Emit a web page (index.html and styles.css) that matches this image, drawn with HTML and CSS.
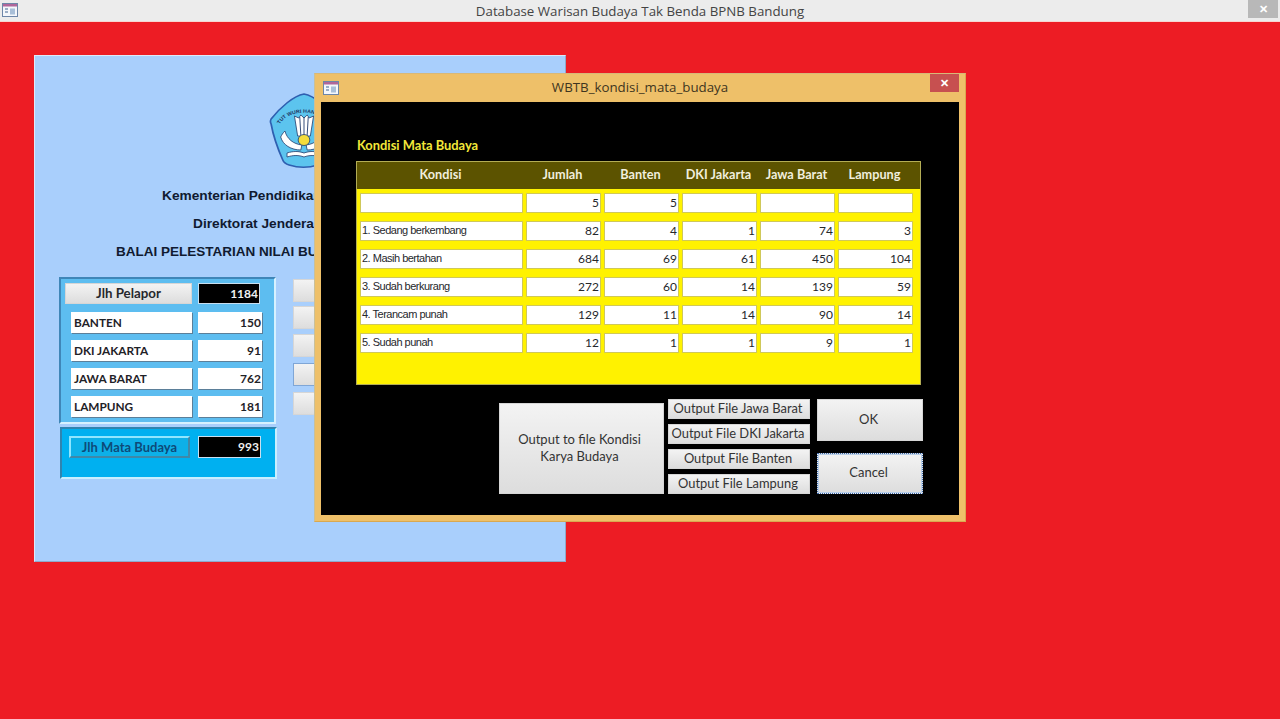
FILE: index.html
```html
<!DOCTYPE html>
<html lang="en">

<head>
    <title>Database Warisan Budaya Tak Benda BPNB Bandung</title>
    <link rel="stylesheet" href="styles.css">
</head>

<body>
    <header class="app-bar">
        <svg class="form-icon" viewBox="0 0 16 14">
            <rect x="0.5" y="0.5" width="15" height="13" fill="#f4f7fb" stroke="#6d86a8" />
            <rect x="1" y="1" width="14" height="2.5" fill="#b0669a" />
            <path d="M3 6h3M3 9h3" stroke="#7d96b5" stroke-width="1.4" />
            <path d="M8 5.5h5v6H8z" fill="#a9bfd8" />
        </svg>
        <span class="app-title">Database Warisan Budaya Tak Benda BPNB Bandung</span>
        <span class="app-close">&#10005;</span>
    </header>

    <!-- main form, partly behind the dialog -->
    <section class="main-form">
        <svg class="logo" viewBox="0 0 66 76" preserveAspectRatio="none">
            <path d="M33 1C43 3 55 14 64 26c1 2 1 3 0 5-3 12-7 24-12 36-1 3-3 4-6 5-9 3-18 3-27 0-3-1-5-2-6-5C8 55 4 43 2 31c-1-2-1-3 0-5C11 14 23 3 33 1z" fill="#5cc4ee" stroke="#2f5fb0" stroke-width="1.6" />
            <path id="logoArc" d="M9 34C15 15 51 15 57 34" fill="none" />
            <text class="logo-text"><textPath href="#logoArc" startOffset="3">TUT WURI HANDAYANI</textPath></text>
            <path d="M24 23l3 20h12l3-20-4 2-2-3-3 3-3-3-2 3z" fill="#fff" stroke="#26406f" stroke-width="0.8" />
            <path d="M29 24l1 18M33 24v18M37 24l-1 18" stroke="#26406f" stroke-width="0.9" />
            <path d="M15 38c2 8 8 13 16 14l-1 5c-9 0-17-5-19-13 1-2 2-4 4-6z" fill="#fff" stroke="#26406f" stroke-width="0.8" />
            <path d="M51 38c-2 8-8 13-16 14l1 5c9 0 17-5 19-13-1-2-2-4-4-6z" fill="#fff" stroke="#26406f" stroke-width="0.8" />
            <circle cx="33" cy="47" r="5.5" fill="#f4dc3c" stroke="#26406f" stroke-width="0.8" />
            <path d="M17 60c6-2 11-2 16 0 5-2 10-2 16 0v4c-6-2-11-2-16 0-5-2-10-2-16 0z" fill="#fff" stroke="#26406f" stroke-width="0.8" />
        </svg>

        <h1 class="org-line org-ministry">Kementerian Pendidikan</h1>
        <h1 class="org-line org-directorate">Direktorat Jenderal</h1>
        <h1 class="org-line org-office">BALAI PELESTARIAN NILAI BUDAYA</h1>

        <div class="main-lower">
            <div class="panels">
                <div class="panel panel-reports">
                    <div class="report-row report-head">
                        <button class="grey-btn report-btn">Jlh Pelapor</button>
                        <span class="black-value report-total">1184</span>
                    </div>
                    <div class="report-row"><span class="region-name">BANTEN</span><span class="region-value">150</span></div>
                    <div class="report-row"><span class="region-name">DKI JAKARTA</span><span class="region-value">91</span></div>
                    <div class="report-row"><span class="region-name">JAWA BARAT</span><span class="region-value">762</span></div>
                    <div class="report-row"><span class="region-name">LAMPUNG</span><span class="region-value">181</span></div>
                </div>
                <div class="panel panel-items">
                    <div class="report-row items-row">
                        <button class="items-btn">Jlh Mata Budaya</button>
                        <span class="black-value items-total">993</span>
                    </div>
                </div>
            </div>
            <div class="side-buttons">
                <button class="grey-btn side-btn side-a"></button>
                <button class="grey-btn side-btn side-b"></button>
                <button class="grey-btn side-btn side-c"></button>
                <button class="grey-btn side-btn side-d"></button>
                <button class="grey-btn side-btn side-e"></button>
            </div>
        </div>
    </section>

    <!-- dialog -->
    <section class="dialog">
        <div class="dialog-bar">
            <svg class="form-icon" viewBox="0 0 16 14">
                <rect x="0.5" y="0.5" width="15" height="13" fill="#f4f7fb" stroke="#6d86a8" />
                <rect x="1" y="1" width="14" height="2.5" fill="#b0669a" />
                <path d="M3 6h3M3 9h3" stroke="#7d96b5" stroke-width="1.4" />
                <path d="M8 5.5h5v6H8z" fill="#a9bfd8" />
            </svg>
            <span class="dialog-title">WBTB_kondisi_mata_budaya</span>
            <span class="dialog-close">&#10005;</span>
        </div>

        <div class="dialog-body">
            <h2 class="dialog-heading">Kondisi Mata Budaya</h2>

            <div class="cond-table">
                <div class="cond-head">
                    <span>Kondisi</span>
                    <span>Jumlah</span>
                    <span>Banten</span>
                    <span>DKI Jakarta</span>
                    <span>Jawa Barat</span>
                    <span>Lampung</span>
                </div>
                <div class="cond-rows">
                    <span class="cell cell-name"></span>
                    <span class="cell">5</span>
                    <span class="cell">5</span>
                    <span class="cell"></span>
                    <span class="cell"></span>
                    <span class="cell"></span>

                    <span class="cell cell-name">1. Sedang berkembang</span>
                    <span class="cell">82</span>
                    <span class="cell">4</span>
                    <span class="cell">1</span>
                    <span class="cell">74</span>
                    <span class="cell">3</span>

                    <span class="cell cell-name">2. Masih bertahan</span>
                    <span class="cell">684</span>
                    <span class="cell">69</span>
                    <span class="cell">61</span>
                    <span class="cell">450</span>
                    <span class="cell">104</span>

                    <span class="cell cell-name">3. Sudah berkurang</span>
                    <span class="cell">272</span>
                    <span class="cell">60</span>
                    <span class="cell">14</span>
                    <span class="cell">139</span>
                    <span class="cell">59</span>

                    <span class="cell cell-name">4. Terancam punah</span>
                    <span class="cell">129</span>
                    <span class="cell">11</span>
                    <span class="cell">14</span>
                    <span class="cell">90</span>
                    <span class="cell">14</span>

                    <span class="cell cell-name">5. Sudah punah</span>
                    <span class="cell">12</span>
                    <span class="cell">1</span>
                    <span class="cell">1</span>
                    <span class="cell">9</span>
                    <span class="cell">1</span>
                </div>
            </div>

            <div class="dialog-actions">
                <button class="grey-btn output-all">Output to file Kondisi Karya Budaya</button>
                <div class="output-list">
                    <button class="grey-btn output-btn">Output File Jawa Barat</button>
                    <button class="grey-btn output-btn">Output File DKI Jakarta</button>
                    <button class="grey-btn output-btn">Output File Banten</button>
                    <button class="grey-btn output-btn">Output File Lampung</button>
                </div>
                <div class="confirm-list">
                    <button class="grey-btn ok-btn">OK</button>
                    <button class="grey-btn cancel-btn">Cancel</button>
                </div>
            </div>
        </div>
    </section>
</body>

</html>
```

FILE: styles.css
```css
* {
    box-sizing: border-box;
}

body {
    margin: 0;
    height: 719px;
    overflow: hidden;
    background-color: #ed1c24;
    font-family: "Lato", "Liberation Sans", sans-serif;
    color: #222222;
}

button {
    font-family: "Lato", "Liberation Sans", sans-serif;
    padding: 0;
    color: #333333;
}

.form-icon {
    width: 16px;
    height: 14px;
    flex: none;
}

/* top bar */
.app-bar {
    position: relative;
    height: 22px;
    display: flex;
    align-items: center;
    padding: 0 0 1px 2px;
    background-color: #ececec;
    border-bottom: 1px solid #f7d5d0;
}

.app-title,
.dialog-title {
    position: absolute;
    left: 0;
    right: 0;
    text-align: center;
    font-family: "Open Sans", sans-serif;
    font-size: 13.3px;
    color: #444444;
}

.app-title {
    top: 2px;
}

.app-close {
    position: absolute;
    right: 2px;
    top: 0;
    width: 30px;
    height: 18px;
    background-color: #b8b8b8;
    color: #ffffff;
    font-size: 11px;
    font-weight: bold;
    line-height: 18px;
    text-align: center;
}

/* main form */
.main-form {
    position: absolute;
    left: 34px;
    top: 55px;
    width: 532px;
    height: 507px;
    padding: 37px 0 0 24px;
    background-color: #a9cffc;
    border-top: 1px solid #dfeaf8;
    border-left: 1px solid #dfeaf8;
    border-right: 1px solid #8fa9c9;
    border-bottom: 1px solid #8fa9c9;
}

.logo {
    display: block;
    width: 70px;
    height: 76px;
    margin: 0 0 13px 210px;
}

.logo-text {
    font-family: "Liberation Sans", sans-serif;
    font-size: 5px;
    font-weight: bold;
    fill: #1d3463;
}

.org-line {
    margin: 0;
    height: 28px;
    line-height: 28px;
    font-family: "Liberation Sans", sans-serif;
    font-size: 13.7px;
    font-weight: bold;
    white-space: nowrap;
    color: #101a30;
}

.org-ministry {
    margin-left: 103px;
}

.org-directorate {
    margin-left: 134px;
}

.org-office {
    margin-left: 57px;
    font-size: 13.5px;
}

.main-lower {
    display: flex;
    gap: 16px;
    margin-top: 11px;
}

.panels {
    width: 218px;
}

.panel {
    border: 2px solid;
}

.panel-reports {
    width: 217px;
    height: 147px;
    padding-top: 4px;
    background-color: #5dbdf0;
    border-color: #3f86b8 #d6f1ff #d6f1ff #3f86b8;
}

.panel-items {
    height: 52px;
    margin: 3px 0 0 1px;
    padding-top: 7px;
    background-color: #00b0f0;
    border-color: #2f84b0 #c8efff #c8efff #2f84b0;
}

.report-row {
    display: flex;
    gap: 6px;
    height: 21px;
    margin: 0 0 7px 10px;
    font-size: 11.8px;
    font-weight: bold;
    line-height: 22px;
}

.report-head {
    margin: 0 0 8px 4px;
}

.items-row {
    height: 22px;
    margin: 0 0 0 7px;
    gap: 8px;
}

.grey-btn {
    background: linear-gradient(#f3f3f3, #dddddd);
    border: 1px solid #d6d6d6;
}

.report-btn {
    width: 127px;
    padding-bottom: 2px;
    font-size: 13.3px;
    font-weight: bold;
    color: #26282c;
}

.black-value {
    background-color: #000000;
    color: #f0f0f0;
    text-align: right;
    padding-right: 1px;
    border: 1px solid #c8dff0;
    font-size: 12px;
    line-height: 19px;
}

.report-total {
    width: 62px;
}

.region-name {
    width: 121px;
    padding-left: 3px;
    background-color: #ffffff;
    box-shadow: 1px 1px 0 #5b7f99;
    color: #1f2227;
}

.region-value {
    width: 64px;
    padding-right: 1px;
    text-align: right;
    background-color: #ffffff;
    box-shadow: 1px 1px 0 #5b7f99;
    color: #1f2227;
    font-size: 12px;
}

.items-btn {
    width: 121px;
    padding-bottom: 1px;
    background-color: #0db0e8;
    border: 2px solid;
    border-color: #8fe6ff #3f88a8 #3f88a8 #8fe6ff;
    font-size: 13px;
    font-weight: bold;
    color: #0d4a78;
}

.items-total {
    width: 63px;
}

.side-buttons {
    display: flex;
    flex-direction: column;
    padding-top: 2px;
}

.side-btn {
    width: 60px;
    height: 23px;
}

.side-b {
    margin-top: 4px;
}

.side-c {
    margin-top: 5px;
}

.side-d {
    margin-top: 6px;
    border-color: #7fa6d6;
}

.side-e {
    margin-top: 6px;
}

/* dialog */
.dialog {
    position: absolute;
    left: 314px;
    top: 73px;
    width: 652px;
    height: 449px;
    display: flex;
    flex-direction: column;
    padding: 0 6px 6px 6px;
    background-color: #eec069;
    border-left: 1px solid #c9c09a;
    border-top: 1px solid #d8b878;
    border-right: 1px solid #d9a850;
    border-bottom: 1px solid #d9a850;
}

.dialog-bar {
    position: relative;
    height: 28px;
    display: flex;
    align-items: center;
    flex: none;
    padding-left: 2px;
}

.dialog-title {
    top: 4px;
    color: #3e3520;
}

.dialog-close {
    position: absolute;
    right: 0;
    top: 0;
    width: 29px;
    height: 18px;
    background-color: #c75050;
    color: #ffffff;
    font-size: 11px;
    font-weight: bold;
    line-height: 18px;
    text-align: center;
}

.dialog-body {
    flex: 1;
    padding: 35px 0 0 35px;
    background-color: #000000;
}

.dialog-heading {
    margin: 0 0 8px 1px;
    height: 16px;
    font-size: 12.9px;
    font-weight: bold;
    line-height: 17px;
    color: #f2e83a;
}

.cond-table {
    width: 565px;
    height: 224px;
    background-color: #fff200;
    border: 1px solid #b3ad55;
}

.cond-head,
.cond-rows {
    display: grid;
    grid-template-columns: 163px repeat(5, 75px);
    column-gap: 3px;
    padding-left: 3px;
}

.cond-head {
    height: 27px;
    margin-bottom: 4px;
    padding-left: 2px;
    background-color: #5c5300;
    font-size: 12.7px;
    font-weight: bold;
    line-height: 24px;
    text-align: center;
    color: #f1eedd;
}

.cond-rows {
    grid-auto-rows: 20px;
    row-gap: 8px;
}

.cell {
    padding-right: 1px;
    background-color: #ffffff;
    border: 1px solid #cfc85a;
    font-size: 12px;
    line-height: 18px;
    text-align: right;
    color: #26282c;
}

.cell-name {
    padding: 0 0 0 1px;
    font-family: "Liberation Sans", sans-serif;
    font-size: 11px;
    letter-spacing: -0.5px;
    line-height: 17px;
    text-align: left;
}

.dialog-actions {
    display: flex;
    margin: 14px 0 0 143px;
}

.output-all {
    width: 165px;
    height: 91px;
    margin: 4px 4px 0 0;
    padding: 0 18px 2px 14px;
    font-size: 13px;
    line-height: 17px;
}

.output-list {
    display: flex;
    flex-direction: column;
    gap: 5px;
    width: 142px;
    margin-right: 7px;
}

.output-btn {
    height: 20px;
    padding: 0 2px 2px 0;
    font-size: 12.9px;
    line-height: 16px;
}

.confirm-list {
    display: flex;
    flex-direction: column;
    gap: 12px;
    width: 106px;
}

.ok-btn,
.cancel-btn {
    padding: 0 3px 3px 0;
    font-size: 13px;
}

.ok-btn {
    height: 42px;
}

.cancel-btn {
    height: 41px;
    border: 1px dotted #3a66a8;
    box-shadow: inset 0 0 0 1px #b9cfe8;
}
```
